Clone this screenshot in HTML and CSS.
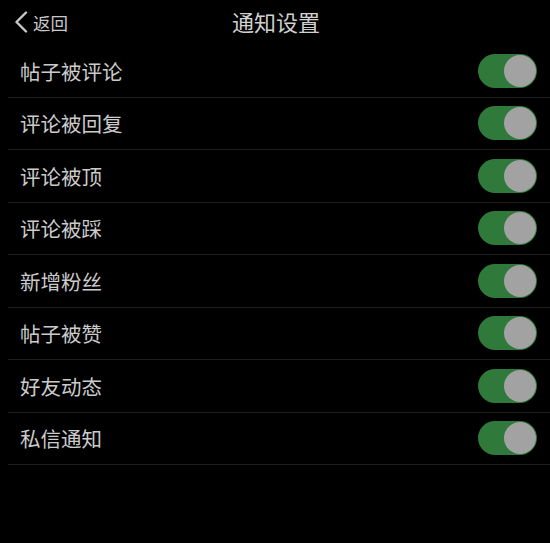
FILE: index.html
```html
<!DOCTYPE html>
<html lang="zh">
<head>
  <meta charset="UTF-8">
  <meta name="viewport" content="width=device-width, initial-scale=1.0">
  <title>通知设置</title>
  <link rel="stylesheet" href="styles.css">
</head>
<body>
  <div class="navbar">
    <a class="back" href="#">
      <svg class="chevron" width="14" height="22" viewBox="0 0 14 22">
        <path d="M12 1.5 L2.5 11 L12 20.5" fill="none" stroke="#c8c8c8" stroke-width="2.4" stroke-linecap="round" stroke-linejoin="round"/>
      </svg>
      <span>返回</span>
    </a>
    <div class="title">通知设置</div>
  </div>

  <ul class="list">
    <li class="row"><span class="label">帖子被评论</span><span class="switch on"></span></li>
    <li class="row"><span class="label">评论被回复</span><span class="switch on"></span></li>
    <li class="row"><span class="label">评论被顶</span><span class="switch on"></span></li>
    <li class="row"><span class="label">评论被踩</span><span class="switch on"></span></li>
    <li class="row"><span class="label">新增粉丝</span><span class="switch on"></span></li>
    <li class="row"><span class="label">帖子被赞</span><span class="switch on"></span></li>
    <li class="row"><span class="label">好友动态</span><span class="switch on"></span></li>
    <li class="row"><span class="label">私信通知</span><span class="switch on"></span></li>
  </ul>
</body>
</html>
```

FILE: styles.css
```css
html, body {
  margin: 0;
  padding: 0;
  background: #000;
}
body {
  font-family: "Noto Sans CJK SC", "Noto Sans", sans-serif;
  color: #cdcdcd;
  width: 550px;
  height: 543px;
  overflow: hidden;
}
.navbar {
  position: relative;
  height: 45px;
  display: flex;
  align-items: center;
  justify-content: center;
}
.back {
  position: absolute;
  left: 14px;
  top: 0;
  height: 45px;
  display: flex;
  align-items: center;
  gap: 5px;
  color: #c8c8c8;
  text-decoration: none;
  font-size: 17.5px;
}
.chevron {
  margin-top: -2px;
}
.title {
  font-size: 22px;
  color: #d0d0d0;
  margin-top: -3px;
  margin-left: 2px;
}
.list {
  list-style: none;
  margin: 0;
  padding: 0 0 0 8px;
}
.row {
  height: 51.5px;
  border-bottom: 1px solid #1f1f1f;
  display: flex;
  align-items: center;
  justify-content: space-between;
  padding: 0 13px 0 12px;
}
.label {
  font-size: 20.5px;
  color: #cbcbcb;
}
.switch {
  position: relative;
  width: 59px;
  height: 34px;
  border-radius: 17px;
  background: #2f7a3a;
}
.switch::after {
  content: "";
  position: absolute;
  right: 1px;
  top: 1px;
  width: 32px;
  height: 32px;
  border-radius: 50%;
  background: #a2a2a2;
}
```
